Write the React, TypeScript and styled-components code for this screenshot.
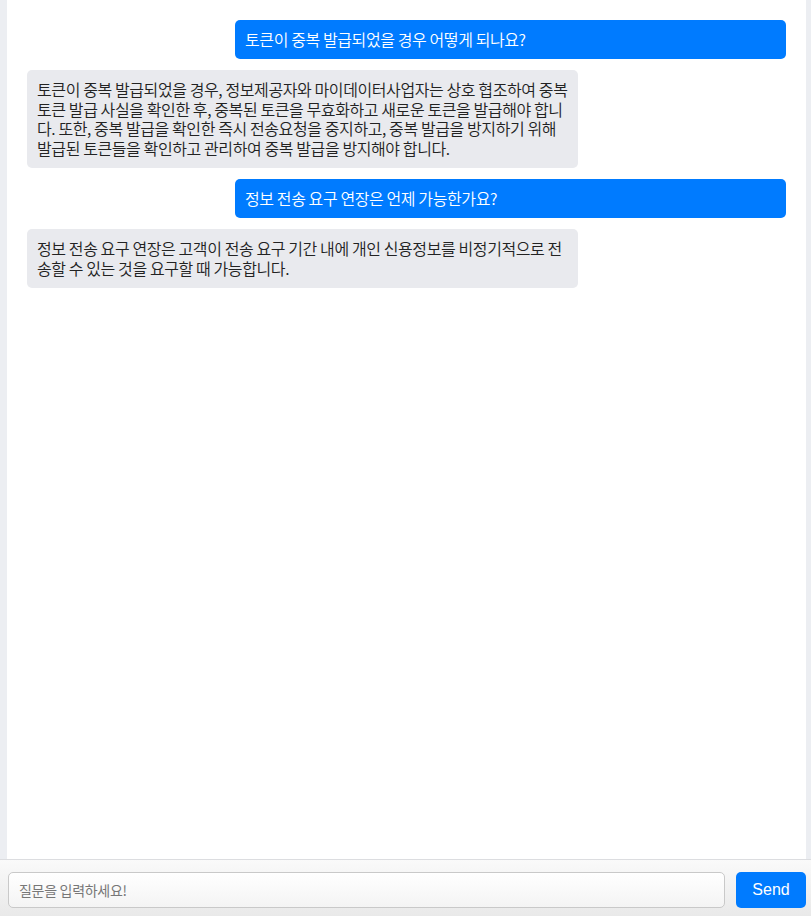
import React from 'react';
import styled, { createGlobalStyle } from 'styled-components';

const GlobalStyle = createGlobalStyle`
  html, body {
    margin: 0;
    padding: 0;
    height: 100%;
    background: #eceef2;
    font-family: "Noto Sans CJK KR", "Noto Sans", sans-serif;
  }
  #root { height: 100%; }
  * { box-sizing: border-box; }
`;

const Page = styled.div`
  display: flex;
  flex-direction: column;
  height: 100vh;
`;

const Panel = styled.main`
  flex: 1 1 auto;
  min-height: 0;
  margin: 0 5px 0 7px;
  padding: 20px 20px 10px;
  background: #fff;
  display: flex;
  flex-direction: column;
  gap: 11px;
  overflow-y: auto;
`;

const Bubble = styled.div<{ $mine: boolean }>`
  width: 551px;
  align-self: ${({ $mine }) => ($mine ? 'flex-end' : 'flex-start')};
  padding: 10px;
  border-radius: 5px;
  background: ${({ $mine }) => ($mine ? '#007bff' : '#e9eaee')};
  color: ${({ $mine }) => ($mine ? '#fff' : '#222')};
  font-size: 16px;
  font-weight: 350;
  letter-spacing: -0.4px;
  line-height: 19.4px;
  word-break: break-all;
`;

const Footer = styled.form`
  flex: 0 0 57px;
  display: flex;
  align-items: flex-start;
  gap: 11px;
  padding: 12px 5px 0 8px;
  border-top: 1px solid #dcdde0;
  background: linear-gradient(#fafafa, #e9e9e9);
`;

const Input = styled.input`
  flex: 1 1 auto;
  height: 36px;
  padding: 0 10px;
  border: 1px solid #c9c9c9;
  border-radius: 5px;
  background: linear-gradient(#fff, #f4f4f4);
  font-family: inherit;
  font-size: 14px;
  letter-spacing: -0.3px;
  color: #333;
  outline: none;

  &::placeholder { color: #777; }
`;

const SendButton = styled.button`
  flex: 0 0 70px;
  height: 36px;
  border: none;
  border-radius: 5px;
  background: #007bff;
  color: #fff;
  font-family: "Liberation Sans", "Noto Sans", sans-serif;
  font-size: 16px;
  cursor: pointer;
`;

const messages = [
  { mine: true, text: '토큰이 중복 발급되었을 경우 어떻게 되나요?' },
  {
    mine: false,
    text: '토큰이 중복 발급되었을 경우, 정보제공자와 마이데이터사업자는 상호 협조하여 중복 토큰 발급 사실을 확인한 후, 중복된 토큰을 무효화하고 새로운 토큰을 발급해야 합니다. 또한, 중복 발급을 확인한 즉시 전송요청을 중지하고, 중복 발급을 방지하기 위해 발급된 토큰들을 확인하고 관리하여 중복 발급을 방지해야 합니다.',
  },
  { mine: true, text: '정보 전송 요구 연장은 언제 가능한가요?' },
  {
    mine: false,
    text: '정보 전송 요구 연장은 고객이 전송 요구 기간 내에 개인 신용정보를 비정기적으로 전송할 수 있는 것을 요구할 때 가능합니다.',
  },
];

export default function App() {
  return (
    <Page>
      <GlobalStyle />
      <Panel>
        {messages.map((m, i) => (
          <Bubble key={i} $mine={m.mine}>{m.text}</Bubble>
        ))}
      </Panel>
      <Footer onSubmit={e => e.preventDefault()}>
        <Input placeholder="질문을 입력하세요!" />
        <SendButton type="submit">Send</SendButton>
      </Footer>
    </Page>
  );
}
